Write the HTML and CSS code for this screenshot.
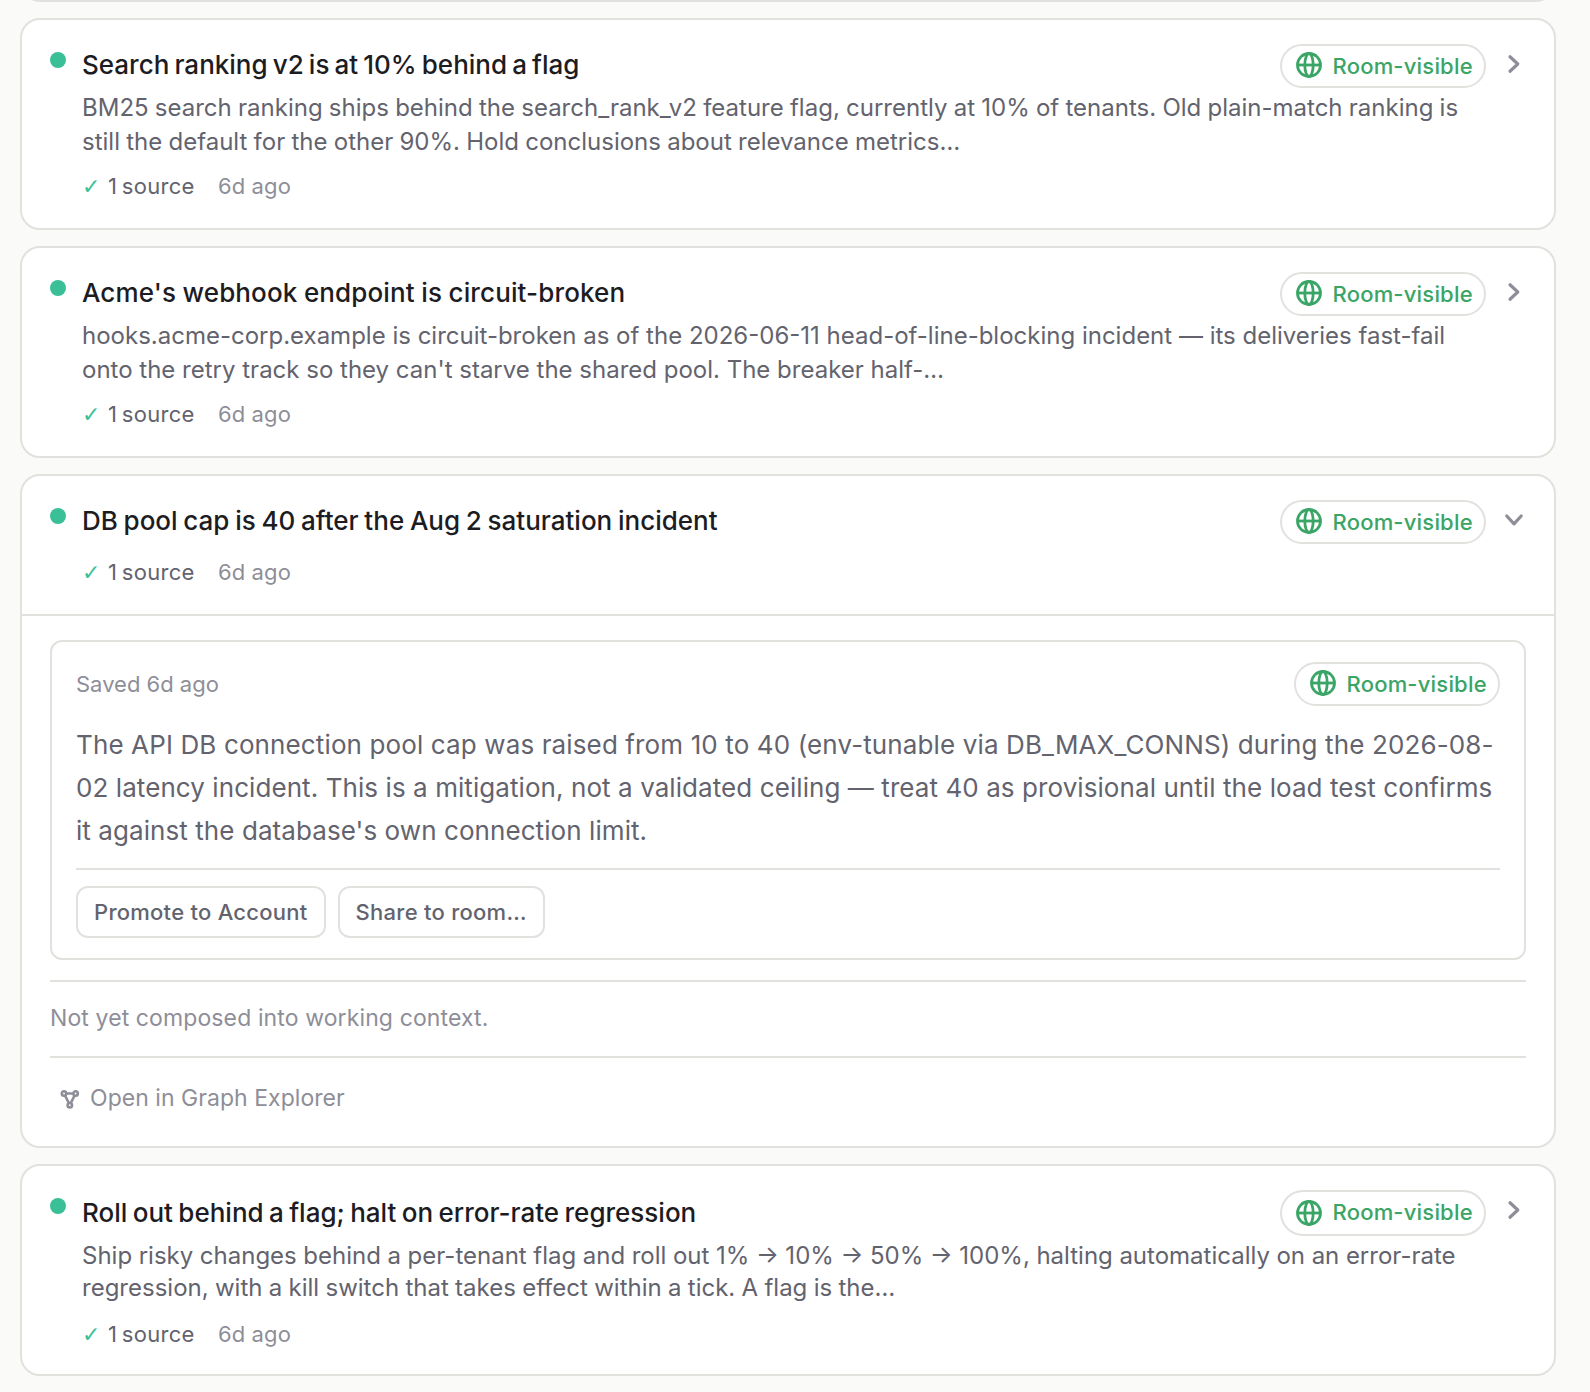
FILE: index.html
```html
<!DOCTYPE html>
<html lang="en">

<head>
    <meta charset="UTF-8">
    <meta name="viewport" content="width=device-width, initial-scale=1.0">
    <title>Memories</title>
    <link rel="stylesheet" href="styles.css">
</head>

<body>
    <!-- Shared icons -->
    <svg class="sprite" aria-hidden="true">
        <symbol id="icon-globe" viewBox="0 0 28 28">
            <circle cx="14" cy="14" r="11.5" />
            <ellipse cx="14" cy="14" rx="4.2" ry="11.5" />
            <path d="M2.5 14h23" />
        </symbol>
        <symbol id="icon-chevron" viewBox="0 0 24 24">
            <path d="M8 4.8l7.8 7.2-7.8 7.2" />
        </symbol>
        <symbol id="icon-graph" viewBox="0 0 20 20">
            <circle cx="4" cy="4.5" r="2.2" />
            <circle cx="15.6" cy="4.5" r="2.2" />
            <circle cx="9.8" cy="16.2" r="2.2" />
            <path d="M6.2 4.5h7.2M5 6.5l4 7.8M14.6 6.5l-4 7.8" />
        </symbol>
    </svg>

    <main class="list">
        <article class="card card-cut"></article>

        <article class="card card-search">
            <div class="card-head">
                <span class="dot"></span>
                <div class="card-main">
                    <div class="title-row">
                        <h3 class="title">Search ranking v2 is at 10% behind a flag</h3>
                        <span class="badge"><svg class="globe"><use href="#icon-globe" /></svg>Room-visible</span>
                    </div>
                    <p class="summary">BM25 search ranking ships behind the search_rank_v2 feature flag, currently at 10% of tenants. Old plain-match ranking is<br>still the default for the other 90%. Hold conclusions about relevance metrics…</p>
                    <div class="meta"><span class="check">✓</span><span class="source">1 source</span><span class="age">6d ago</span></div>
                </div>
                <svg class="chevron"><use href="#icon-chevron" /></svg>
            </div>
        </article>

        <article class="card card-webhook">
            <div class="card-head">
                <span class="dot"></span>
                <div class="card-main">
                    <div class="title-row">
                        <h3 class="title">Acme's webhook endpoint is circuit-broken</h3>
                        <span class="badge"><svg class="globe"><use href="#icon-globe" /></svg>Room-visible</span>
                    </div>
                    <p class="summary">hooks.acme-corp.example is circuit-broken as of the 2026-06-11 head-of-line-blocking incident — its deliveries fast-fail<br>onto the retry track so they can't starve the shared pool. The breaker half-…</p>
                    <div class="meta"><span class="check">✓</span><span class="source">1 source</span><span class="age">6d ago</span></div>
                </div>
                <svg class="chevron"><use href="#icon-chevron" /></svg>
            </div>
        </article>

        <article class="card open">
            <div class="card-head">
                <span class="dot"></span>
                <div class="card-main">
                    <div class="title-row">
                        <h3 class="title">DB pool cap is 40 after the Aug 2 saturation incident</h3>
                        <span class="badge"><svg class="globe"><use href="#icon-globe" /></svg>Room-visible</span>
                    </div>
                    <div class="meta"><span class="check">✓</span><span class="source">1 source</span><span class="age">6d ago</span></div>
                </div>
                <svg class="chevron"><use href="#icon-chevron" /></svg>
            </div>
            <div class="card-body">
                <section class="entry">
                    <div class="entry-head">
                        <span class="saved">Saved 6d ago</span>
                        <span class="badge"><svg class="globe"><use href="#icon-globe" /></svg>Room-visible</span>
                    </div>
                    <p class="entry-text">The API DB connection pool cap was raised from 10 to 40 (env-tunable via DB_MAX_CONNS) during the 2026-08-<br>02 latency incident. This is a mitigation, not a validated ceiling — treat 40 as provisional until the load test confirms<br>it against the database's own connection limit.</p>
                    <div class="actions">
                        <button type="button">Promote to Account</button>
                        <button type="button">Share to room…</button>
                    </div>
                </section>
                <p class="context">Not yet composed into working context.</p>
                <div class="explore">
                    <a class="explore-link"><svg class="graph"><use href="#icon-graph" /></svg>Open in Graph Explorer</a>
                </div>
            </div>
        </article>

        <article class="card card-rollout">
            <div class="card-head">
                <span class="dot"></span>
                <div class="card-main">
                    <div class="title-row">
                        <h3 class="title">Roll out behind a flag; halt on error-rate regression</h3>
                        <span class="badge"><svg class="globe"><use href="#icon-globe" /></svg>Room-visible</span>
                    </div>
                    <p class="summary">Ship risky changes behind a per-tenant flag and roll out 1% → 10% → 50% → 100%, halting automatically on an error-rate<br>regression, with a kill switch that takes effect within a tick. A flag is the…</p>
                    <div class="meta"><span class="check">✓</span><span class="source">1 source</span><span class="age">6d ago</span></div>
                </div>
                <svg class="chevron"><use href="#icon-chevron" /></svg>
            </div>
        </article>
    </main>
</body>
</html>
```

FILE: styles.css
```css
* {
    box-sizing: border-box;
}

body {
    margin: 0;
    background-color: #fafaf8;
    font-family: Inter, "Liberation Sans", sans-serif;
    color: #1c1c22;
    overflow: hidden;
}

h3, p {
    margin: 0;
}

.sprite {
    display: none;
}

svg {
    fill: none;
    stroke: currentColor;
    flex-shrink: 0;
}

.list {
    display: flex;
    flex-direction: column;
    gap: 16px;
    width: 1536px;
    margin-left: 20px;
}

.card {
    height: 212px;
    background-color: #fff;
    border: 2px solid #e1e1de;
    border-radius: 20px;
}

/* Bottom edge of the card scrolled out of view */
.card-cut {
    height: 42px;
    margin-top: -40px;
}

.card.open {
    height: 674px;
}

.card-head {
    display: flex;
    padding: 24px 28px;
}

.dot {
    width: 16px;
    height: 16px;
    margin: 8px 16px 0 0;
    border-radius: 50%;
    background-color: #3abf97;
}

.card-main {
    flex: 1;
    white-space: nowrap;
}

.title-row {
    display: flex;
    justify-content: space-between;
    align-items: flex-start;
    height: 44px;
}

.title {
    font-size: 26px;
    font-weight: 500;
    line-height: 42px;
    word-spacing: -1.2px;
}

.badge {
    display: flex;
    align-items: center;
    gap: 9.5px;
    width: 206px;
    height: 44px;
    padding-left: 13px;
    border: 2px solid #e1e1de;
    border-radius: 22px;
    font-size: 22px;
    font-weight: 500;
    letter-spacing: 0.2px;
    color: #3aa566;
}

.globe {
    width: 28px;
    height: 28px;
    margin-bottom: 2px;
    stroke-width: 2.8;
}

.chevron {
    width: 24px;
    height: 24px;
    margin: 8px 0 0 16px;
    color: #8e8e98;
    stroke-width: 3.2;
    stroke-linecap: round;
    stroke-linejoin: round;
}

.open .chevron {
    transform: rotate(90deg);
}

.summary {
    margin-top: 3px;
    font-size: 24px;
    line-height: 34px;
    color: #63636e;
}

.meta {
    display: flex;
    margin-top: 13px;
    font-size: 22px;
    line-height: 28px;
}

.check {
    width: 26px;
    font-family: "DejaVu Sans", sans-serif;
    line-height: 30px;
    color: #3abf97;
}

.source {
    width: 110px;
    letter-spacing: 0.3px;
    word-spacing: -2px;
    color: #63636e;
}

.age, .saved {
    color: #8e8e98;
}

.age {
    letter-spacing: 0.1px;
}

/* Text fitting per card */
.card-search .title {
    word-spacing: -1.8px;
}

.card-search .summary {
    word-spacing: -0.5px;
}

.card-webhook .title {
    letter-spacing: 0.13px;
    word-spacing: -0.6px;
}

.card-rollout .title {
    line-height: 46px;
    word-spacing: -1.5px;
}

.card-rollout .title-row {
    height: 46px;
}

.card-rollout .badge {
    height: 46px;
    padding-bottom: 2px;
    border-radius: 23px;
}

.card-rollout .globe {
    margin: 2px 0 0;
}

.card-rollout .summary {
    margin-top: 4px;
    line-height: 32px;
    word-spacing: -0.43px;
}

.card-rollout .summary::first-line {
    word-spacing: -0.16px;
}

.card-rollout .meta {
    margin-top: 16px;
}

/* Expanded card */
.open .card-head {
    height: 138px;
}

.open .meta {
    margin-top: 14px;
}

.card-body {
    padding: 24px 28px;
    border-top: 2px solid #e1e1de;
}

.entry {
    height: 320px;
    padding: 20px 24px;
    border: 2px solid #e1e1de;
    border-radius: 12px;
}

.entry-head {
    display: flex;
    justify-content: space-between;
    align-items: center;
    font-size: 22px;
}

.entry-text {
    margin: 17px 0 16px;
    font-size: 26px;
    line-height: 43px;
    letter-spacing: 0.075px;
    white-space: nowrap;
    color: #63636e;
}

.entry-text::first-line {
    letter-spacing: 0.124px;
}

.actions {
    display: flex;
    gap: 12px;
    padding-top: 16px;
    border-top: 2px solid #e1e1de;
}

button {
    height: 52px;
    padding: 0 16px;
    border: 2px solid #e1e1de;
    border-radius: 12px;
    background-color: #fff;
    font-family: inherit;
    font-size: 22px;
    font-weight: 500;
    letter-spacing: 0.26px;
    color: #63636e;
}

.context {
    height: 76px;
    margin-top: 20px;
    border-top: 2px solid #e1e1de;
    font-size: 23px;
    line-height: 73px;
    letter-spacing: 0.11px;
    color: #8e8e98;
}

.explore {
    border-top: 2px solid #e1e1de;
    padding: 24px 0 0 10px;
}

.explore-link {
    display: flex;
    align-items: center;
    gap: 10px;
    font-size: 23px;
    line-height: 32px;
    letter-spacing: 0.04px;
    color: #8e8e98;
}

.graph {
    width: 20px;
    height: 20px;
    margin-top: 2px;
    stroke-width: 2.6;
}
```
